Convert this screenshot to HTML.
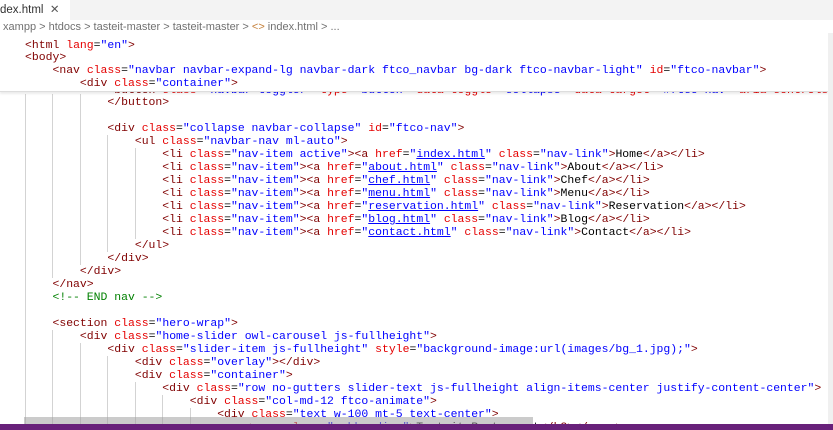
<!DOCTYPE html>
<html><head><meta charset="utf-8"><style>
*{margin:0;padding:0;box-sizing:border-box}
body{width:833px;height:430px;overflow:hidden;background:#fff;position:relative;font-family:"Liberation Sans",sans-serif}
.tabs{position:absolute;left:0;top:0;width:833px;height:20px;background:#f3f3f3}
.tab{position:absolute;left:0;top:0;width:70px;height:20px;background:#fff;font-size:11.5px;color:#333;line-height:20px;padding-left:0}
.bc{position:absolute;left:0;top:20px;height:14px;font-size:11px;color:#717171;line-height:14px;white-space:pre}
.l{position:absolute;left:25px;height:13px;line-height:13px;font-family:"Liberation Mono",monospace;font-size:11.45px;white-space:pre;color:#000}
.t{color:#800000}.a{color:#e50000}.s{color:#0000ff}.c{color:#008000}.u{text-decoration:underline}
.g{position:absolute;width:1px;background:#d3d3d3}
.clip{position:absolute;left:0;top:0;width:828px;height:430px;overflow:hidden}
.sticky{position:absolute;left:0;top:33px;width:828px;height:59px;background:#fff;border-bottom:1px solid #ddd;box-shadow:0 2px 2px rgba(0,0,0,.08);overflow:hidden}
.m{position:absolute;left:0;top:1px;width:828px;height:430px}
</style></head><body>
<div class="tabs"><div class="tab">dex.html &nbsp;<span style="color:#555">✕</span></div></div>
<div class="bc"> xampp &gt; htdocs &gt; tasteit-master &gt; tasteit-master &gt; <span style="color:#c5803a">&lt;&gt;</span> index.html &gt; ...</div>

<div class="clip">
<div class="m">
<div class="g" style="left:25px;top:93px;height:332px"></div>
<div class="g" style="left:52px;top:93px;height:184px"></div>
<div class="g" style="left:80px;top:93px;height:171px"></div>
<div class="g" style="left:107px;top:134px;height:117px"></div>
<div class="g" style="left:135px;top:147px;height:91px"></div>
<div class="g" style="left:52px;top:329px;height:96px"></div>
<div class="g" style="left:80px;top:342px;height:83px"></div>
<div class="g" style="left:107px;top:355px;height:70px"></div>
<div class="g" style="left:135px;top:381px;height:44px"></div>
<div class="g" style="left:162px;top:394px;height:31px"></div>
<div class="g" style="left:190px;top:407px;height:18px"></div>

<div class="l" style="top:83px">            <span class="t">&lt;button</span> <span class="a">class</span>=<span class="s">"navbar-toggler"</span> <span class="a">type</span>=<span class="s">"button"</span> <span class="a">data-toggle</span>=<span class="s">"collapse"</span> <span class="a">data-target</span>=<span class="s">"#ftco-nav"</span> <span class="a">aria-controls</span>=<span class="s">"ftco-nav"</span></div>

<div class="l" style="top:95px">            <span class="t">&lt;/button&gt;</span></div>
<div class="l" style="top:121px">            <span class="t">&lt;div</span> <span class="a">class</span>=<span class="s">"collapse navbar-collapse"</span> <span class="a">id</span>=<span class="s">"ftco-nav"</span><span class="t">&gt;</span></div>
<div class="l" style="top:134px">                <span class="t">&lt;ul</span> <span class="a">class</span>=<span class="s">"navbar-nav ml-auto"</span><span class="t">&gt;</span></div>
<div class="l" style="top:147px">                    <span class="t">&lt;li</span> <span class="a">class</span>=<span class="s">"nav-item active"</span><span class="t">&gt;&lt;a</span> <span class="a">href</span>=<span class="s">"<span class="u">index.html</span>"</span> <span class="a">class</span>=<span class="s">"nav-link"</span><span class="t">&gt;</span>Home<span class="t">&lt;/a&gt;&lt;/li&gt;</span></div>
<div class="l" style="top:160px">                    <span class="t">&lt;li</span> <span class="a">class</span>=<span class="s">"nav-item"</span><span class="t">&gt;&lt;a</span> <span class="a">href</span>=<span class="s">"<span class="u">about.html</span>"</span> <span class="a">class</span>=<span class="s">"nav-link"</span><span class="t">&gt;</span>About<span class="t">&lt;/a&gt;&lt;/li&gt;</span></div>
<div class="l" style="top:173px">                    <span class="t">&lt;li</span> <span class="a">class</span>=<span class="s">"nav-item"</span><span class="t">&gt;&lt;a</span> <span class="a">href</span>=<span class="s">"<span class="u">chef.html</span>"</span> <span class="a">class</span>=<span class="s">"nav-link"</span><span class="t">&gt;</span>Chef<span class="t">&lt;/a&gt;&lt;/li&gt;</span></div>
<div class="l" style="top:186px">                    <span class="t">&lt;li</span> <span class="a">class</span>=<span class="s">"nav-item"</span><span class="t">&gt;&lt;a</span> <span class="a">href</span>=<span class="s">"<span class="u">menu.html</span>"</span> <span class="a">class</span>=<span class="s">"nav-link"</span><span class="t">&gt;</span>Menu<span class="t">&lt;/a&gt;&lt;/li&gt;</span></div>
<div class="l" style="top:199px">                    <span class="t">&lt;li</span> <span class="a">class</span>=<span class="s">"nav-item"</span><span class="t">&gt;&lt;a</span> <span class="a">href</span>=<span class="s">"<span class="u">reservation.html</span>"</span> <span class="a">class</span>=<span class="s">"nav-link"</span><span class="t">&gt;</span>Reservation<span class="t">&lt;/a&gt;&lt;/li&gt;</span></div>
<div class="l" style="top:212px">                    <span class="t">&lt;li</span> <span class="a">class</span>=<span class="s">"nav-item"</span><span class="t">&gt;&lt;a</span> <span class="a">href</span>=<span class="s">"<span class="u">blog.html</span>"</span> <span class="a">class</span>=<span class="s">"nav-link"</span><span class="t">&gt;</span>Blog<span class="t">&lt;/a&gt;&lt;/li&gt;</span></div>
<div class="l" style="top:225px">                    <span class="t">&lt;li</span> <span class="a">class</span>=<span class="s">"nav-item"</span><span class="t">&gt;&lt;a</span> <span class="a">href</span>=<span class="s">"<span class="u">contact.html</span>"</span> <span class="a">class</span>=<span class="s">"nav-link"</span><span class="t">&gt;</span>Contact<span class="t">&lt;/a&gt;&lt;/li&gt;</span></div>
<div class="l" style="top:238px">                <span class="t">&lt;/ul&gt;</span></div>
<div class="l" style="top:251px">            <span class="t">&lt;/div&gt;</span></div>
<div class="l" style="top:264px">        <span class="t">&lt;/div&gt;</span></div>
<div class="l" style="top:277px">    <span class="t">&lt;/nav&gt;</span></div>
<div class="l" style="top:290px">    <span class="c">&lt;!-- END nav --&gt;</span></div>
<div class="l" style="top:316px">    <span class="t">&lt;section</span> <span class="a">class</span>=<span class="s">"hero-wrap"</span><span class="t">&gt;</span></div>
<div class="l" style="top:329px">        <span class="t">&lt;div</span> <span class="a">class</span>=<span class="s">"home-slider owl-carousel js-fullheight"</span><span class="t">&gt;</span></div>
<div class="l" style="top:342px">            <span class="t">&lt;div</span> <span class="a">class</span>=<span class="s">"slider-item js-fullheight"</span> <span class="a">style</span>=<span class="s">"background-image:url(images/bg_1.jpg);"</span><span class="t">&gt;</span></div>
<div class="l" style="top:355px">                <span class="t">&lt;div</span> <span class="a">class</span>=<span class="s">"overlay"</span><span class="t">&gt;&lt;/div&gt;</span></div>
<div class="l" style="top:368px">                <span class="t">&lt;div</span> <span class="a">class</span>=<span class="s">"container"</span><span class="t">&gt;</span></div>
<div class="l" style="top:381px">                    <span class="t">&lt;div</span> <span class="a">class</span>=<span class="s">"row no-gutters slider-text js-fullheight align-items-center justify-content-center"</span><span class="t">&gt;</span></div>
<div class="l" style="top:394px">                        <span class="t">&lt;div</span> <span class="a">class</span>=<span class="s">"col-md-12 ftco-animate"</span><span class="t">&gt;</span></div>
<div class="l" style="top:407px">                            <span class="t">&lt;div</span> <span class="a">class</span>=<span class="s">"text w-100 mt-5 text-center"</span><span class="t">&gt;</span></div>
<div class="l" style="top:420px">                                <span class="t">&lt;span</span> <span class="a">class</span>=<span class="s">"subheading"</span><span class="t">&gt;</span>Tasteit Restaurant<span class="t">&lt;/h3&gt;&lt;/span&gt;</span></div>
</div>

<div class="sticky">
<div class="l" style="top:6px"><span class="t">&lt;html</span> <span class="a">lang</span>=<span class="s">"en"</span><span class="t">&gt;</span></div>
<div class="l" style="top:18px"><span class="t">&lt;body&gt;</span></div>
<div class="l" style="top:31px">    <span class="t">&lt;nav</span> <span class="a">class</span>=<span class="s">"navbar navbar-expand-lg navbar-dark ftco_navbar bg-dark ftco-navbar-light"</span> <span class="a">id</span>=<span class="s">"ftco-navbar"</span><span class="t">&gt;</span></div>
<div class="l" style="top:44px">        <span class="t">&lt;div</span> <span class="a">class</span>=<span class="s">"container"</span><span class="t">&gt;</span></div>
</div>
</div>

<div style="position:absolute;left:24px;top:417px;width:509px;height:8px;background:rgba(160,160,160,.55)"></div>
<div style="position:absolute;left:828px;top:33px;width:5px;height:392px;background:#f0f0f0"></div>
<div style="position:absolute;left:0;top:424px;width:833px;height:6px;background:#68217a"></div>
</body></html>
